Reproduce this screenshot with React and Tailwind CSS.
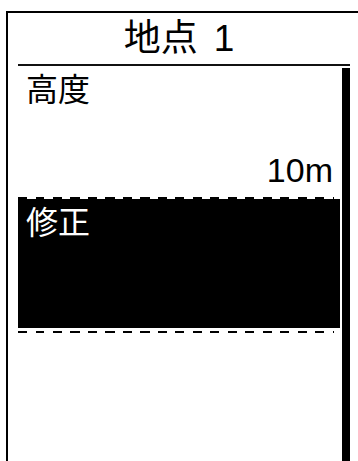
export default function App() {
  const font = { fontFamily: '"Liberation Sans", "Noto Sans CJK JP", sans-serif' };
  const dash = "h-[2px] mr-[6px] bg-[repeating-linear-gradient(90deg,#000_0_9px,transparent_9px_17.5px)]";
  return (
    <div className="w-[358px] h-[461px] bg-white overflow-hidden pl-[6px] pt-[11px] flex" style={font}>
      <div className="flex-1 flex flex-col border-t-2 border-l-2 border-black">
        {/* title */}
        <div className="h-[51px] flex items-center justify-center pr-[8px]">
          <span className="text-[37px] leading-none text-black">
            地点<span className="ml-[16px]">1</span>
          </span>
        </div>
        <div className="ml-[10px] mr-[8px] h-[2px] bg-[#111]" />

        <div className="flex-1 flex gap-[2px] pl-[10px] pr-[8px]">
          <div className="flex-1 flex flex-col">
            <div className="h-[131px] flex flex-col justify-between px-[8px] pt-[8px] pb-[10px]">
              <span className="text-[32px] leading-none text-black">高度</span>
              <span className="self-end text-[34px] leading-none text-black -mr-[1px]">10m</span>
            </div>
            <div className={dash} />
            <div className="h-[129px] bg-black px-[8px] pt-[8px]">
              <span className="text-[32px] leading-none text-white">修正</span>
            </div>
            <div className={dash + " mt-[3px]"} />
          </div>
          <div className="w-[8px] mt-[2px] bg-black" />
        </div>
      </div>
    </div>
  );
}
